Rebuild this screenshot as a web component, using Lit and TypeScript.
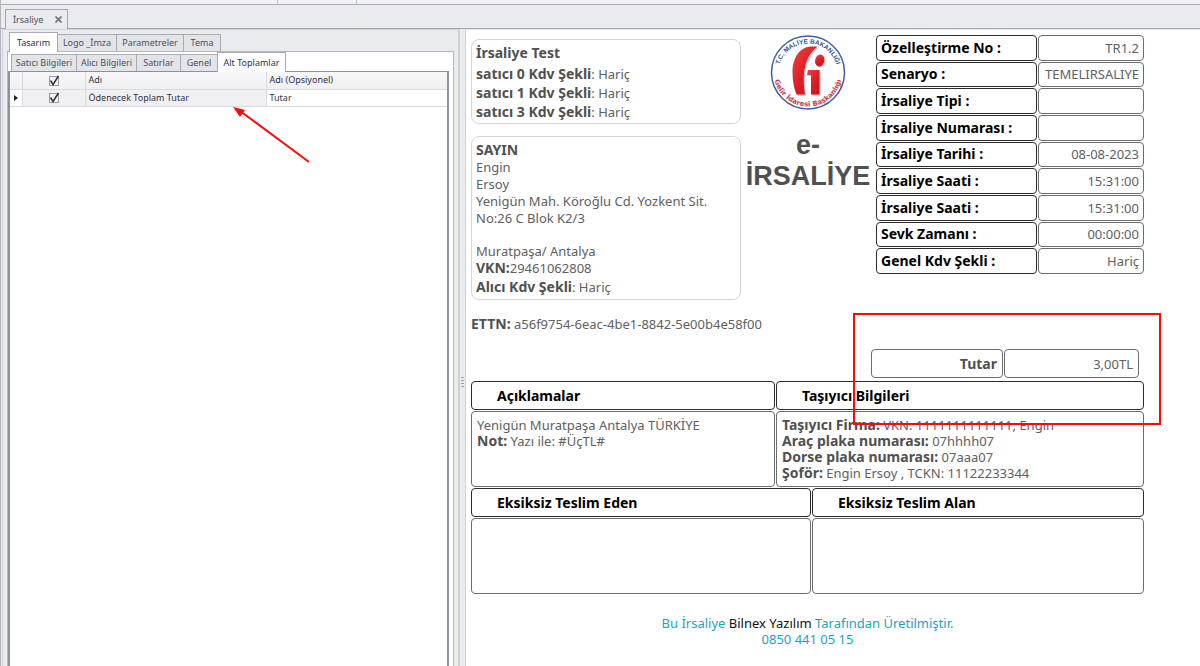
import { LitElement, html, css, svg } from "lit";
import { customElement } from "lit/decorators.js";

const META: [string, string][] = [
  ["Özelleştirme No :", "TR1.2"],
  ["Senaryo :", "TEMELIRSALIYE"],
  ["İrsaliye Tipi :", ""],
  ["İrsaliye Numarası :", ""],
  ["İrsaliye Tarihi :", "08-08-2023"],
  ["İrsaliye Saati :", "15:31:00"],
  ["İrsaliye Saati :", "15:31:00"],
  ["Sevk Zamanı :", "00:00:00"],
  ["Genel Kdv Şekli :", "Hariç"],
];

const seal = svg`
  <defs>
    <path id="arc-top" d="M8.500 38a29.500 29.500 0 0 1 59 0"/>
    <path id="arc-bottom" d="M3.500 37a34.500 34.500 0 0 0 69 0"/>
    <linearGradient id="red" x1="0" y1="0" x2="1" y2="1">
      <stop offset="0" stop-color="#f04444"/><stop offset=".5" stop-color="#dc1f26"/><stop offset="1" stop-color="#c3141c"/>
    </linearGradient>
  </defs>
  <circle cx="38" cy="37.500" r="36.500" fill="#fff" stroke="#3f5f9f" stroke-width="1.500"/>
  <text font-size="6.500" font-weight="700" fill="#33508f" font-family="Liberation Sans, sans-serif" text-anchor="middle"><textPath href="#arc-top" startOffset="50%">T.C. MALİYE BAKANLIĞI</textPath></text>
  <text font-size="7" font-weight="700" fill="#c8404a" font-family="DejaVu Sans, sans-serif" text-anchor="middle"><textPath href="#arc-bottom" startOffset="50%">Gelir İdaresi Başkanlığı</textPath></text>
  <g fill="#aaa0a0" opacity=".6" transform="translate(1.200 1.200)">
    <path d="M47.500 11.500H40C28 13 22.500 25 22.500 37c0 9 1.500 16.500 4 22.500h8.500C33.500 49 33 41 35 32c1.800-8 5-14.500 12.500-20.500z"/>
    <ellipse cx="49.700" cy="25.500" rx="4.500" ry="6" transform="rotate(15 49.700 25.500)"/>
    <path d="M38 35h11.500v24.500H41V40h-4z"/>
  </g>
  <g fill="url(#red)">
    <path d="M47.500 11.500H40C28 13 22.500 25 22.500 37c0 9 1.500 16.500 4 22.500h8.500C33.500 49 33 41 35 32c1.800-8 5-14.500 12.500-20.500z"/>
    <ellipse cx="49.700" cy="25.500" rx="4.500" ry="6" transform="rotate(15 49.700 25.500)"/>
    <path d="M38 35h11.500v24.500H41V40h-4z"/>
  </g>`;

@customElement("app-root")
export class AppRoot extends LitElement {
  static styles = css`
    :host { display: block; color: #606060; font: 13px/16px "Noto Sans", "Open Sans", sans-serif; }
    * { box-sizing: border-box; }
    .app { position: relative; display: flex; flex-direction: column; height: 100vh; min-height: 640px; overflow: hidden; background: #eaebef; border-left: 1px solid #b4b5be; }
    .ribbon { display: flex; height: 5px; background: #f2f2f5; border-bottom: 1px solid #a9aab4; }
    .group { width: 277px; border-right: 1px solid #c4c5cc; }
    .group + .group { width: 79px; }
    .tabs { display: flex; align-items: flex-end; }
    button { font: 9px/12px "Noto Sans", sans-serif; color: #4d4d60; padding: 0; margin: 0; }
    .doc-tabs { height: 24px; padding-left: 4px; border-bottom: 1px solid #a5a6b1; }
    .doc-tab { display: flex; align-items: center; justify-content: space-between; width: 63px; height: 20px; margin-bottom: -1px; padding: 0 5px 0 7px; border: 1px solid #a5a6b1; border-bottom: 0; background: #eaebef; }
    .plain { display: flex; border: 0; background: none; }
    .main { display: flex; flex: 1; min-height: 0; }
    .side { display: flex; flex-direction: column; flex: 0 0 458px; padding: 2px 4px 0 3px; border: solid #d0d1d7; border-width: 1px 2px 0 1px; margin-left: 1px; }
    .tab { height: 17px; border: 1px solid #a9aab5; border-bottom: 0; background: #e3e4e8; margin-right: -1px; }
    .tab.on { color: #303043; background: #fff; position: relative; }
    .upper { height: 19px; padding-left: 3px; }
    .upper .on { height: 20px; margin-bottom: -1px; }
    .page { display: flex; flex-direction: column; flex: 1; background: #fff; border: 1px solid #b5b6c0; border-bottom: 0; padding-right: 4px; margin-left: 1px; }
    .lower { height: 19px; padding-left: 3px; }
    .lower .on { height: 20px; margin-bottom: -1px; }
    .w1 { width: 49px; } .w2 { width: 60px; } .w3 { width: 68px; } .w4 { width: 38px; }
    .v1 { width: 66px; } .v2 { width: 61px; } .v3 { width: 45px; } .v4 { width: 38px; } .v5 { width: 69px; }
    .list { flex: 1; border: 1px solid #8f909e; border-width: 1px 2px 0; }
    .grid { width: 100%; border-collapse: collapse; table-layout: fixed; color: #303043; font-size: 9px; line-height: 12px; }
    .grid th, .grid td { height: 17px; padding: 0 3px; text-align: left; font-weight: 400; border: 1px solid #d9dadf; border-top: 0; }
    .grid th { background: linear-gradient(#f8f8fa, #eeeff1); }
    .grid th:first-child, .grid td:first-child { border-left: 0; padding: 0 4px; }
    .grid th:last-child, .grid td:last-child { border-right: 0; }
    .grid .tick { padding: 0; text-align: center; }
    .grid .soft { background: #f0f0f2; }
    .c1 { width: 12px; } .c2 { width: 63px; } .c3 { width: 181px; }
    .marker { display: block; width: 4px; height: 6px; fill: #222; }
    .box { display: inline-grid; width: 12px; height: 12px; vertical-align: middle; }
    .box > * { grid-area: 1 / 1; }
    .box input { appearance: none; margin: 1px; width: 10px; height: 10px; border: 1px solid #9a9ba5; background: #f4f4f6; }
    .box svg { display: none; width: 12px; height: 12px; pointer-events: none; }
    .box input:checked + svg { display: block; }
    .splitter { display: flex; align-items: center; justify-content: center; flex: 0 0 6px; border-right: 1px solid #cfd0d8; padding-top: 68px; }
    .grip { width: 3px; height: 10px; background: repeating-linear-gradient(#a0a1ac 0 1px, transparent 1px 3px); }
    .doc { flex: 1; background: #fff; padding: 5px 56px 0 5px; border-top: 1px solid #e4e5e9; }
    strong { color: #505050; font-size: 14px; line-height: 16px; }
    p { margin: 0; }
    .head { display: grid; grid-template-columns: 270px minmax(124px, 1fr) 269px; gap: 5px; height: 265px; }
    .parties { display: flex; flex-direction: column; gap: 12px; padding-top: 4px; }
    .party { border: 1px solid #d6d6d6; border-radius: 8px; padding: 4px; line-height: 17px; }
    .party .tall { line-height: 19px; }
    .party .gap { padding-top: 16px; line-height: 16px; }
    .party .title { line-height: 18px; }
    .seller { height: 85px; }
    .seller .title { padding-bottom: 3px; }
    .buyer { height: 164px; }
    .brand { display: flex; flex-direction: column; align-items: center; }
    .brand svg { width: 76px; height: 76px; }
    h1 { margin: 19px 0 0; font: 700 27px/31px "Liberation Sans", Arial, sans-serif; color: #505050; text-align: center; }
    .cells { border-collapse: separate; border-spacing: 1px; }
    .cells th, .cells td { border: 1px solid #6c6c6c; border-radius: 4px; padding: 0 4px; text-align: left; font-weight: 400; }
    .cells .h { border-color: #2c2c2c; color: #000; font-weight: 700; font-size: 14px; }
    .meta { width: 270px; height: 241px; margin-top: -1px; }
    .cells .r { text-align: right; }
    .meta .h { width: 161px; }
    .ettn { padding-top: 16px; height: 48px; }
    .sum { width: 270px; margin: 0 4px 2px auto; }
    .sum td, .sum th { height: 29px; padding: 0 5px; }
    .sum th { width: 132px; }
    .wide { width: calc(100% + 2px); margin: -1px; table-layout: fixed; }
    .wide .h { height: 29px; padding: 0 25px; }
    .wide td { height: 76px; vertical-align: top; padding: 5px; }
    .half1 { width: 304px; } .half2 { width: 340px; }
    .foot { padding-top: 21px; text-align: center; color: #17a5c0; }
    .foot b { font-weight: 400; color: #111; }
    .foot a { color: inherit; text-decoration: none; }
    .frame { position: absolute; left: 852px; top: 313px; width: 308px; height: 112px; border: 2px solid #ff0808; pointer-events: none; }
    .arrow { position: absolute; left: 231px; top: 105px; width: 80px; height: 60px; pointer-events: none; }
  `;

  private check(label: string) {
    return html`<label class="box"><input type="checkbox" checked aria-label=${label}><svg viewBox="0 0 12 12"><path d="M2.500 5.500L5 9.500 10.500 1" fill="none" stroke="#333340" stroke-width="1.500"/></svg></label>`;
  }

  render() {
    return html`<div class="app">
      <div class="ribbon"><div class="group"></div><div class="group"></div></div>
      <div class="tabs doc-tabs"><div class="doc-tab"><button class="plain">İrsaliye</button><button class="plain" aria-label="Kapat"><svg width="7" height="7" viewBox="0 0 7 7"><path d="M.5.500l6 6M6.500.500l-6 6" stroke="#72737f" stroke-width="1.700"/></svg></button></div></div>
      <div class="main">
        <section class="side">
          <div class="tabs upper"><button class="tab on w1">Tasarım</button><button class="tab w2">Logo _İmza</button><button class="tab w3">Parametreler</button><button class="tab w4">Tema</button></div>
          <div class="page">
            <div class="tabs lower"><button class="tab v1">Satıcı Bilgileri</button><button class="tab v2">Alıcı Bilgileri</button><button class="tab v3">Satırlar</button><button class="tab v4">Genel</button><button class="tab on v5">Alt Toplamlar</button></div>
            <div class="list"><table class="grid">
              <colgroup><col class="c1"><col class="c2"><col class="c3"><col></colgroup>
              <tr><th></th><th class="tick">${this.check("Tümü")}</th><th>Adı</th><th>Adı (Opsiyonel)</th></tr>
              <tr><td><svg class="marker" viewBox="0 0 4 6"><path d="M0 0l4 3-4 3z"/></svg></td><td class="tick soft">${this.check("Seç")}</td><td class="soft">Ödenecek Toplam Tutar</td><td>Tutar</td></tr>
            </table></div>
          </div>
        </section>
        <div class="splitter"><div class="grip"></div></div>
        <article class="doc">
          <div class="head">
            <div class="parties">
              <div class="party seller"><p class="title"><strong>İrsaliye Test</strong></p>
                ${[0, 1, 3].map((n) => html`<p class="tall"><strong>satıcı ${n} Kdv Şekli</strong>: Hariç</p>`)}</div>
              <div class="party buyer"><p class="title"><strong>SAYIN</strong></p><p>Engin</p><p>Ersoy</p><p>Yenigün Mah. Köroğlu Cd. Yozkent Sit. No:26 C Blok K2/3</p><p class="gap">Muratpaşa/ Antalya</p><p class="tall"><strong>VKN:</strong>29461062808</p><p class="tall"><strong>Alıcı Kdv Şekli</strong>: Hariç</p></div>
            </div>
            <div class="brand"><svg viewBox="0 0 76 76">${seal}</svg><h1>e-<br>İRSALİYE</h1></div>
            <div><table class="cells meta">${META.map(([k, v]) => html`<tr><th class="h">${k}</th><td class="r">${v}</td></tr>`)}</table></div>
          </div>
          <p class="ettn"><strong>ETTN:</strong> a56f9754-6eac-4be1-8842-5e00b4e58f00</p>
          <table class="cells sum"><tr><th class="r"><strong>Tutar</strong></th><td class="r">3,00TL</td></tr></table>
          <table class="cells wide"><tr><th class="h half1">Açıklamalar</th><th class="h">Taşıyıcı Bilgileri</th></tr>
            <tr><td>Yenigün Muratpaşa Antalya TÜRKİYE<br><strong>Not:</strong> Yazı ile: #ÜçTL#</td>
            <td><strong>Taşıyıcı Firma:</strong> VKN: 1111111111111, Engin<br><strong>Araç plaka numarası:</strong> 07hhhh07<br><strong>Dorse plaka numarası:</strong> 07aaa07<br><strong>Şoför:</strong> Engin Ersoy , TCKN: 11122233344</td></tr></table>
          <table class="cells wide"><tr><th class="h half2">Eksiksiz Teslim Eden</th><th class="h">Eksiksiz Teslim Alan</th></tr><tr><td></td><td></td></tr></table>
          <div class="foot"><p>Bu İrsaliye <b>Bilnex Yazılım</b> Tarafından Üretilmiştir.</p><p><a href="tel:08504410515">0850 441 05 15</a></p></div>
        </article>
      </div>
      <div class="frame"></div>
      <svg class="arrow" viewBox="0 0 80 60"><path d="M77 57L8 6" stroke="#ff0808" stroke-width="2"/><path d="M1 2l12 3-5 7z" fill="#ff0808"/></svg>
    </div>`;
  }
}
